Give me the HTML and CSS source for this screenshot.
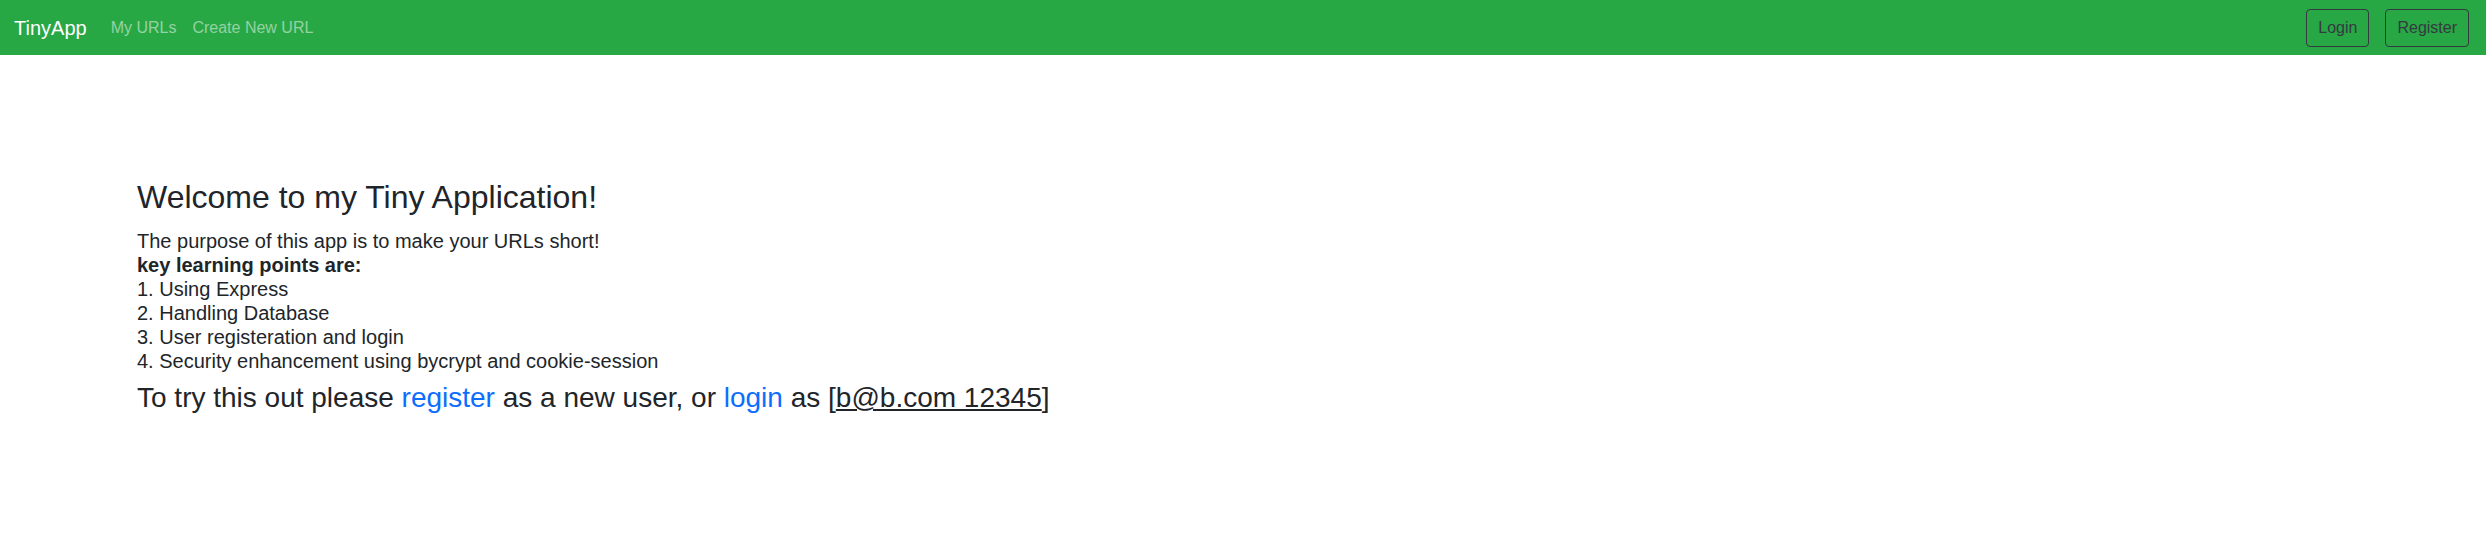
FILE: index.html
```html
<!DOCTYPE html>
<html lang="en">
<head>
<meta charset="utf-8">
<title>TinyApp</title>
<link rel="stylesheet" href="styles.css">
</head>
<body>
<nav class="navbar">
  <div class="nav-left">
    <a class="brand" href="#">TinyApp</a>
    <a class="nav-link" href="#">My URLs</a>
    <a class="nav-link" href="#">Create New URL</a>
  </div>
  <div class="nav-right">
    <a class="btn" href="#">Login</a>
    <a class="btn" href="#">Register</a>
  </div>
</nav>
<main class="content">
  <h2 class="title">Welcome to my Tiny Application!</h2>
  <h5 class="intro">The purpose of this app is to make your URLs short!<br>
    <b>key learning points are:</b><br>
    1. Using Express<br>
    2. Handling Database<br>
    3. User registeration and login<br>
    4. Security enhancement using bycrypt and cookie-session</h5>
  <h3 class="try">To try this out please <a href="#">register</a> as a new user, or <a href="#">login</a> as [<u>b@b.com 12345</u>]</h3>
</main>
</body>
</html>
```
FILE: styles.css
```css
* { box-sizing: border-box; }
html, body { margin: 0; padding: 0; }
body {
  font-family: "Liberation Sans", Arial, sans-serif;
  color: #212529;
  background: #fff;
  font-size: 16px;
  line-height: 1.5;
}
.navbar {
  height: 55px;
  background: #28a745;
  display: flex;
  align-items: center;
  justify-content: space-between;
  padding: 0 17px 0 14px;
}
.nav-left { display: flex; align-items: center; }
.brand {
  color: #fff;
  font-size: 20px;
  line-height: 30px;
  text-decoration: none;
  margin-right: 16px;
}
.nav-link {
  color: rgba(255,255,255,.5);
  font-size: 16px;
  line-height: 24px;
  padding: 0 8px;
  text-decoration: none;
}
.nav-right { display: flex; gap: 16px; align-items: center; }
.btn {
  display: inline-block;
  border: 1px solid #343a40;
  color: #343a40;
  border-radius: 4px;
  padding: 6px 11px;
  font-size: 16px;
  line-height: 24px;
  text-decoration: none;
}
.content {
  padding: 123px 0 0 137px;
}
.title {
  font-size: 32px;
  font-weight: 500;
  line-height: 1.2;
  margin: 0 0 13px;
}
.intro {
  font-size: 20px;
  font-weight: 500;
  line-height: 24px;
  margin: 0 0 8px;
}
.intro b { font-weight: 700; }
.try {
  font-size: 28px;
  font-weight: 500;
  line-height: 1.2;
  margin: 0;
}
.try a { color: #0d6efd; text-decoration: none; }
```
